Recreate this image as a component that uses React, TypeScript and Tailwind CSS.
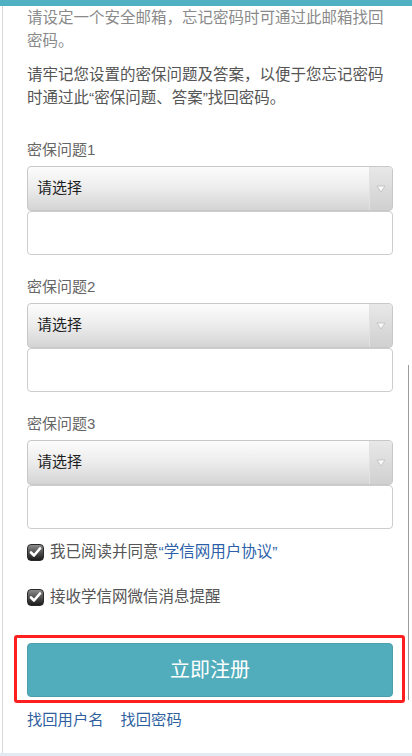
import React from 'react'

const font = {
  fontFamily: '"Liberation Sans", "Noto Sans CJK SC", sans-serif',
}

function SelectBox() {
  return (
    <div className="flex h-[45px] overflow-hidden rounded-[4px] border border-[#c8c8c8] bg-linear-to-b from-[#fcfcfc] via-[#ececec] to-[#d4d4d4]">
      <div className="flex flex-1 items-center pl-[9px] text-[15px] text-[#1e1e1e]">请选择</div>
      <div className="flex w-[23px] items-center justify-center border-l border-[#e2e2e2] bg-linear-to-b from-[#e8e8e8] to-[#d0d0d0]">
        <svg width="10" height="8" viewBox="0 0 10 8">
          <path d="M1 1 L9 1 L5 7 Z" fill="#fafafa" stroke="#bdbdbd" strokeWidth="0.8" />
        </svg>
      </div>
    </div>
  )
}

function Question({ n, first }: { n: number; first?: boolean }) {
  return (
    <div className={first ? 'mt-[31px]' : 'mt-[22px]'}>
      <div className="mb-[6px] text-[15px] leading-[20px] text-[#666]">密保问题{n}</div>
      <SelectBox />
      <div className="h-[44px] rounded-[4px] border border-[#cdcdcd] bg-white" />
    </div>
  )
}

function CheckMark() {
  return (
    <div className="flex h-[17px] w-[17px] shrink-0 items-center justify-center rounded-[4px] border border-[#2a2a2a] bg-linear-to-b from-[#8c8c8c] to-[#1c1c1c]">
      <svg width="13" height="12" viewBox="0 0 13 12">
        <path d="M2 6.5 L5 9.5 L11 2.5" fill="none" stroke="#ffffff" strokeWidth="2.6" strokeLinecap="round" strokeLinejoin="round" />
      </svg>
    </div>
  )
}

export default function App() {
  return (
    <div className="relative h-[756px] overflow-hidden border-b-[3px] border-[#e2ebf3] bg-white" style={font}>
      <div className="h-[6px] bg-[#4fb1c2]" />

      <div className="ml-[2px] h-full border-l border-[#d9d9d9] pl-[24px] pr-[19px]">
        <p className="text-[15.5px] leading-[23px] text-[#8a8a8a]">
          请设定一个安全邮箱，忘记密码时可通过此邮箱找回密码。
        </p>
        <p className="mt-[11px] text-[15.5px] leading-[23px] text-[#555]">
          请牢记您设置的密保问题及答案，以便于您忘记密码时通过此“密保问题、答案”找回密码。
        </p>

        <Question n={1} first />
        <Question n={2} />
        <Question n={3} />

        <div className="mt-[13px] flex h-[20px] items-center gap-[6px] text-[15.5px] text-[#555]">
          <CheckMark />
          <span>
            我已阅读并同意<span className="text-[#2c5fa8]">“学信网用户协议”</span>
          </span>
        </div>
        <div className="mt-[25px] flex h-[20px] items-center gap-[6px] text-[15.5px] text-[#555]">
          <CheckMark />
          <span>接收学信网微信消息提醒</span>
        </div>

        <div className="relative mt-[36px]">
          <button className="flex h-[54px] w-full items-center justify-center rounded-[4px] border border-[#4a9fab] bg-[#51adbb] text-[20px] text-white">
            立即注册
          </button>
          <div className="pointer-events-none absolute -bottom-[6px] -left-[13px] -right-[12px] -top-[8px] rounded-[3px] border-[3px] border-[#ff1f1f]" />
        </div>

        <div className="mt-[13px] flex gap-[17px] text-[15.3px] leading-[20px] text-[#2f5f9f]">
          <span>找回用户名</span>
          <span>找回密码</span>
        </div>
      </div>

      <div className="absolute right-[3px] top-[365px] h-[335px] w-px bg-[#9c9c9c]" />
    </div>
  )
}
